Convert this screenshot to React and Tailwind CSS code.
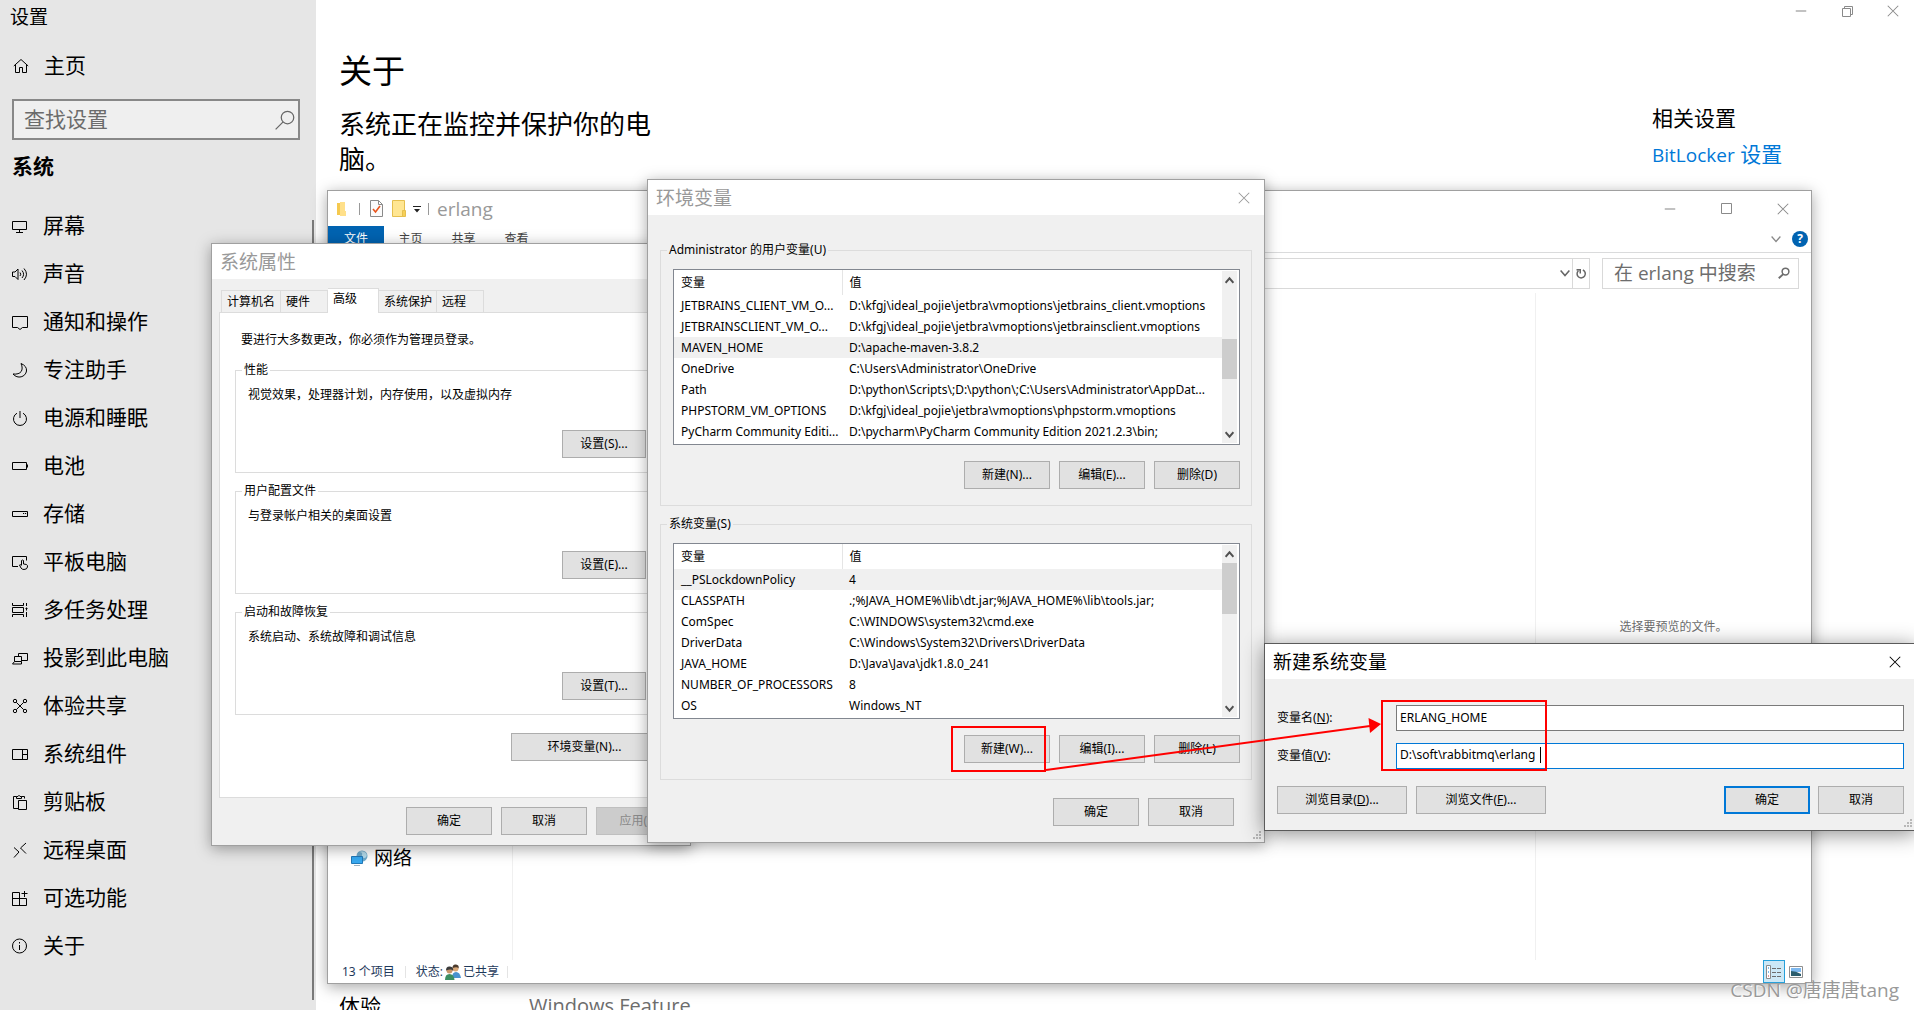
import { useState } from "react";

const FONT = "font-['Open_Sans','Noto_Sans_CJK_SC',sans-serif]";
const DIALOG_FONT = "font-['Noto_Sans','Noto_Sans_CJK_SC',sans-serif]";

function Icon({ children, size = 16, className = "" }) {
  return (
    <svg
      width={size}
      height={size}
      viewBox="0 0 16 16"
      fill="none"
      stroke="currentColor"
      strokeWidth="1"
      className={`shrink-0 ${className}`}
      aria-hidden="true"
    >
      {children}
    </svg>
  );
}

const NAV = [
  { label: "屏幕", icon: <path d="M.5 3.500h14v8H.5zM7.500 11.500v3M4 14.500h7" /> },
  {
    label: "声音",
    icon: <path d="M.5 6v4.500h2.500l3 3v-10.500l-3 3zM8 6.500q1.500 1.800 0 3.500M10 4.500q3.200 3.800 0 7.500M12 2.500q5 5.700 0 11.500" />,
  },
  { label: "通知和操作", icon: <path d="M.5 2.500h15v11h-5l-2.500 2-2.500-2h-5z" /> },
  { label: "专注助手", icon: <path d="M9 1.500q6 2.500 5.500 7.500c-.8 6-9 8.500-13.500 3 8 1 11-4 8-10.500z" /> },
  { label: "电源和睡眠", icon: <path d="M5 3.200a6.500 6.500 0 1 0 6 0M8 1v7" /> },
  { label: "电池", icon: <path d="M.5 4.500h14v7H.5zM15.500 6.500v3" /> },
  { label: "存储", icon: <path d="M.5 5.500h15v5H.5zM11 7.500h1.200M13 7.500h1.200" /> },
  {
    label: "平板电脑",
    icon: (
      <>
        <path d="M6 12.500H.5v-10h14v4" />
        <path d="M9.500 11V6.500q1-1 2 0V10l3 .5q1.200.5 1 2.500-.5 2.500-3.500 2.500-2 0-3-1.500L7.500 11q1-.8 2 .5" />
      </>
    ),
  },
  {
    label: "多任务处理",
    icon: <path d="M.5 1v2.500h11V1M.5 15v-2.500h11V15M.5 5.500h11v5H.5zM14.500 1v3M14.500 5.500v3M13.500 6.500h2M14.500 10v5" />,
  },
  { label: "投影到此电脑", icon: <path d="M6.500 6.500v-3h9v7h-6M2.500 6.500h7v5h-7zM2.500 11.500l-2 2.500h9v-2.500" /> },
  {
    label: "体验共享",
    icon: (
      <>
        <circle cx="3" cy="3" r="1.700" />
        <circle cx="13" cy="3" r="1.700" />
        <circle cx="3" cy="13" r="1.700" />
        <circle cx="13" cy="13" r="1.700" />
        <path d="M4.300 4.300l7.400 7.400M11.700 4.300l-7.400 7.400" />
      </>
    ),
  },
  { label: "系统组件", icon: <path d="M.5 3.500h15v10H.5zM10.500 3.500v10M10.500 8.500h5" /> },
  { label: "剪贴板", icon: <path d="M6 14.500H1.500v-12h3M9.500 2.500h3v2M4.500 4.500v-2h1.500q1-2.500 2 0h1.500v2zM6.500 6.500h8v9h-8z" /> },
  { label: "远程桌面", icon: <path d="M2 5.500l5 4.500-5 5.500M14 1L8.500 6l5.500 5.500" /> },
  { label: "可选功能", icon: <path d="M.5 2.500h7v13h-7zM.5 8.500h14v7h-14M12.500 1v6M9.500 3.500h6" /> },
  {
    label: "关于",
    icon: (
      <>
        <circle cx="7.500" cy="8" r="7" />
        <path d="M7.500 7v5M7.500 4v1.500" />
      </>
    ),
  },
];

const USER_VARS = [
  ["JETBRAINS_CLIENT_VM_O...", "D:\\kfgj\\ideal_pojie\\jetbra\\vmoptions\\jetbrains_client.vmoptions"],
  ["JETBRAINSCLIENT_VM_O...", "D:\\kfgj\\ideal_pojie\\jetbra\\vmoptions\\jetbrainsclient.vmoptions"],
  ["MAVEN_HOME", "D:\\apache-maven-3.8.2"],
  ["OneDrive", "C:\\Users\\Administrator\\OneDrive"],
  ["Path", "D:\\python\\Scripts\\;D:\\python\\;C:\\Users\\Administrator\\AppDat..."],
  ["PHPSTORM_VM_OPTIONS", "D:\\kfgj\\ideal_pojie\\jetbra\\vmoptions\\phpstorm.vmoptions"],
  ["PyCharm Community Editi...", "D:\\pycharm\\PyCharm Community Edition 2021.2.3\\bin;"],
];

const SYSTEM_VARS = [
  ["__PSLockdownPolicy", "4"],
  ["CLASSPATH", ".;%JAVA_HOME%\\lib\\dt.jar;%JAVA_HOME%\\lib\\tools.jar;"],
  ["ComSpec", "C:\\WINDOWS\\system32\\cmd.exe"],
  ["DriverData", "C:\\Windows\\System32\\Drivers\\DriverData"],
  ["JAVA_HOME", "D:\\Java\\Java\\jdk1.8.0_241"],
  ["NUMBER_OF_PROCESSORS", "8"],
  ["OS", "Windows_NT"],
];

function Button({ children, className = "w-[86px]", primary, disabled }) {
  const look = disabled
    ? "border border-[#bfbfbf] bg-[#cccccc] text-[#8a8a8a]"
    : primary
      ? "border-2 border-[#0078d7] bg-[#e1e1e1]"
      : "border border-[#adadad] bg-[#e1e1e1]";
  return (
    <button type="button" disabled={disabled} className={`h-7 shrink-0 text-xs whitespace-nowrap ${look} ${className}`}>
      {children}
    </button>
  );
}

function CloseIcon() {
  return (
    <Icon size={12}>
      <path d="M1 1l14 14M15 1L1 15" strokeWidth="1.400" />
    </Icon>
  );
}

function Grip() {
  return (
    <svg width="9" height="9" className="absolute right-[2px] bottom-[2px]" fill="#b8b8b8" aria-hidden="true">
      <path d="M6 0h2v2H6zM3 3h2v2H3zM6 3h2v2H6zM0 6h2v2H0zM3 6h2v2H3zM6 6h2v2H6z" />
    </svg>
  );
}

function Dialog({ title, active, closable = true, grip, className, children }) {
  return (
    <section
      className={`absolute border bg-[#f0f0f0] text-xs leading-4 text-black ${DIALOG_FONT} ${
        active ? "border-[#5a5a5a] shadow-[0_3px_20px_rgba(0,0,0,0.45)]" : "border-[#a0a0a0] shadow-[0_3px_14px_rgba(0,0,0,0.35)]"
      } ${className}`}
    >
      <header
        className={`flex h-[35px] items-center justify-between bg-white pr-3 pl-2 ${active ? "text-black" : "text-[#999999]"}`}
      >
        <h2 className="text-[19px] leading-6">{title}</h2>
        {closable && (
          <button type="button" aria-label="关闭" className="px-[2px]">
            <CloseIcon />
          </button>
        )}
      </header>
      {children}
      {grip && <Grip />}
    </section>
  );
}

function Settings() {
  return (
    <div className="flex h-full">
      <nav className="relative flex w-[316px] shrink-0 flex-col bg-[#e6e6e6] px-3 text-[21px]">
        <div className="-ml-[2px] h-[34px] text-[19px] leading-[34px]">设置</div>
        <a href="#home" className="mt-2 flex h-12 items-center gap-[15px]">
          <Icon className="ml-[1px]">
            <path d="M.8 8L8 1.500 15.200 8M2.500 6.500v8h4V9.500h3v5h4v-8" />
          </Icon>
          主页
        </a>
        <div className="mt-[9px] mr-1 flex h-[41px] items-center border-2 border-[#888888] bg-[#efefef] pr-[3px] pl-[10px]">
          <input
            aria-label="查找设置"
            placeholder="查找设置"
            className="min-w-0 flex-1 bg-transparent outline-none placeholder:text-[#6b6b6b]"
          />
          <Icon size={20} className="text-[#666666]">
            <circle cx="10" cy="6" r="5" />
            <path d="M6.500 9.500L.5 15.500" />
          </Icon>
        </div>
        <h2 className="mt-[10px] h-8 leading-8 font-bold">系统</h2>
        <ul className="mt-5">
          {NAV.map((item) => (
            <li key={item.label}>
              <a href={`#${item.label}`} className="flex h-12 items-center gap-[15px]">
                <Icon>{item.icon}</Icon>
                {item.label}
              </a>
            </li>
          ))}
        </ul>
        <div className="absolute top-[220px] right-[2px] bottom-[10px] w-[2px] bg-[#7a7a7a]" />
      </nav>

      <main className="flex-1 pt-[49px] pl-[23px]">
        <h1 className="text-[33px] leading-[44px]">关于</h1>
        <p className="mt-[14px] max-w-[320px] text-[26px] leading-[35px]">系统正在监控并保护你的电脑。</p>
        <div className="mt-[815px] flex text-[21px] leading-7">
          <span className="w-[190px]">体验</span>
          <span className="text-xl leading-7 text-[#6d6d6d]">Windows Feature</span>
        </div>
      </main>

      <aside className="w-[262px] shrink-0 text-[21px] leading-7">
        <div className="-mr-[2px] flex h-[22px] justify-end text-[#8a8a8a]">
          <button type="button" aria-label="最小化" className="flex w-[46px] items-center justify-center">
            <Icon size={12}>
              <path d="M1 8h14" strokeWidth="1.400" />
            </Icon>
          </button>
          <button type="button" aria-label="还原" className="flex w-[46px] items-center justify-center">
            <svg width="11" height="11" fill="none" stroke="currentColor" aria-hidden="true">
              <path d="M.5 2.500h8v8h-8zM2.500 2.500v-2h8v8h-2" />
            </svg>
          </button>
          <button type="button" aria-label="关闭" className="flex w-[46px] items-center justify-center">
            <CloseIcon />
          </button>
        </div>
        <h3 className="mt-[82px]">相关设置</h3>
        <a href="#bitlocker" className="mt-2 block text-[#0078d7]">
          <span className="text-[19px] leading-7">BitLocker</span> 设置
        </a>
      </aside>
    </div>
  );
}

function Explorer() {
  return (
    <section className="absolute top-[190px] right-[102px] bottom-[26px] left-[327px] flex flex-col border border-[#a0a0a0] bg-white text-xs leading-4 shadow-[0_3px_14px_rgba(0,0,0,0.35)]">
      <header className="flex h-[35px] items-center pr-[22px] pl-[9px]">
        <svg width="10" height="14" aria-hidden="true">
          <path d="M0 1h3v12H0z" fill="#f5c94f" />
          <path d="M3 0h5v9h1v5H3z" fill="#ffe08a" />
        </svg>
        <span className="ml-3 h-3 w-px bg-[#999999]" />
        <svg width="13" height="17" className="ml-[10px]" fill="#fbfbfb" stroke="#8a8a8a" aria-hidden="true">
          <path d="M.5.5h8l4 4v12H.5zM8.500.5v4h4" />
          <path d="M3 9l2.500 3L10 6" fill="none" stroke="#e8541c" strokeWidth="1.600" />
        </svg>
        <svg width="14" height="17" className="ml-[9px]" stroke="#e5bf4e" aria-hidden="true">
          <path d="M.5.5h12v16H.5z" fill="#ffe692" />
          <path d="M10.500 10.500h3v6h-3z" fill="#f7d057" />
        </svg>
        <svg width="8" height="8" className="ml-[7px]" fill="#222222" aria-hidden="true">
          <path d="M0 1h8v1H0zM1 4h6L4 7.500z" />
        </svg>
        <span className="ml-[7px] h-3 w-px bg-[#999999]" />
        <h2 className="ml-2 text-[19px] leading-6 text-[#999999]">erlang</h2>
        <div className="ml-auto flex items-center gap-[45px] text-[#8a8a8a]">
          <button type="button" aria-label="最小化">
            <Icon size={12}>
              <path d="M1 8h14" strokeWidth="1.400" />
            </Icon>
          </button>
          <button type="button" aria-label="最大化">
            <svg width="11" height="11" fill="none" stroke="currentColor" aria-hidden="true">
              <path d="M.5.5h10v10H.5z" />
            </svg>
          </button>
          <button type="button" aria-label="关闭">
            <CloseIcon />
          </button>
        </div>
      </header>

      <div className="flex h-[27px] items-center border-b border-[#dadbdc] text-[#444444]">
        <button type="button" className="h-full w-14 bg-[#0063b1] text-white">
          文件
        </button>
        <button type="button" className="w-[53px]">主页</button>
        <button type="button" className="w-[53px]">共享</button>
        <button type="button" className="w-[53px]">查看</button>
        <div className="ml-auto flex items-center gap-[11px] pr-[3px]">
          <Icon size={10} className="text-[#888888]">
            <path d="M1 4l7 8 7-8" strokeWidth="2" />
          </Icon>
          <button type="button" aria-label="帮助" className="h-4 w-4 rounded-full bg-[#0063b1] text-xs leading-4 font-bold text-white">
            ?
          </button>
        </div>
      </div>

      <div className="flex h-10 items-center gap-3 pr-3 pl-[120px]">
        <div className="flex h-[31px] flex-1 items-center justify-end border border-[#d9d9d9] text-[#666666]">
          <Icon size={10} className="mr-[2px]">
            <path d="M1 4l7 8 7-8" strokeWidth="2.500" />
          </Icon>
          <button type="button" aria-label="刷新" className="flex h-full w-[17px] items-center justify-center border-l border-[#d9d9d9]">
            <Icon size={12}>
              <path d="M10.500 4a5.500 5.500 0 1 1-6 1M2 3.500h5v5" strokeWidth="2" />
            </Icon>
          </button>
        </div>
        <div className="flex h-[31px] w-[197px] items-center border border-[#d9d9d9] pr-2 pl-[11px] text-[#6d6d6d]">
          <input
            aria-label="在 erlang 中搜索"
            placeholder="在 erlang 中搜索"
            className="min-w-0 flex-1 bg-transparent text-[19px] leading-7 outline-none placeholder:text-[#6d6d6d]"
          />
          <Icon size={12}>
            <circle cx="10" cy="6" r="4.500" strokeWidth="2" />
            <path d="M7 9.500L1 15" strokeWidth="2.500" />
          </Icon>
        </div>
      </div>

      <div className="flex min-h-0 flex-1">
        <div className="flex w-[185px] flex-col justify-end border-r border-[#f0f0f0] pb-[88px] pl-[23px]">
          <a href="#network" className="flex h-7 items-center gap-[6px] text-[19px] leading-7">
            <svg width="17" height="17" aria-hidden="true">
              <circle cx="11" cy="6" r="5.500" fill="#6fa9c9" />
              <path d="M8 2q4 0 3 3t3 3q3-2 1-5-3-3-7-1z" fill="#b5dcec" />
              <path d="M.5 6.500h11v7H.5z" fill="#38a9f0" stroke="#2279b8" />
              <path d="M3 15.500h6" stroke="#9fb4c2" />
            </svg>
            网络
          </a>
        </div>
        <div className="flex-1" />
        <div className="flex w-[276px] items-center justify-center border-l border-[#f0f0f0] text-[#6d6d6d]">
          选择要预览的文件。
        </div>
      </div>

      <footer className="flex h-[23px] items-center pr-2 pl-[14px] text-[#1e395b]">
        <span className={DIALOG_FONT}>13 个项目</span>
        <span className="mr-[10px] ml-[10px] h-3 w-px bg-[#e4e4e4]" />
        <span>状态:</span>
        <svg width="18" height="16" className="mx-[1px]" aria-hidden="true">
          <path d="M8 14q0-6 4-6t5 6z" fill="#4a93cf" />
          <circle cx="11.500" cy="4.500" r="3" fill="#d9a878" />
          <path d="M8.500 4q0-4 3.500-3.500t2.500 4q-1-2-6-.5z" fill="#4b3a2c" />
          <path d="M1 16q0-6 4.500-6t5 6z" fill="#3d8f62" />
          <circle cx="5.500" cy="6.500" r="3" fill="#c9966a" />
          <path d="M2 6.500q0-4.500 4-4t3 4.500q-1-2.500-7-.5z" fill="#3b3b3b" />
        </svg>
        <span>已共享</span>
        <span className="ml-2 h-3 w-px bg-[#e4e4e4]" />
        <div className="ml-auto flex items-center gap-1">
          <button type="button" aria-label="详细信息" className="flex h-[23px] w-[22px] items-center justify-center border border-[#26a0da] bg-[#cce8f6]">
            <svg width="16" height="14" fill="none" aria-hidden="true">
              <path d="M.5.5h4v13h-4z" fill="#ffffff" stroke="#8a8a8a" />
              <path d="M2 3h1M2 7h1" stroke="#0078d7" />
              <path d="M2 11h1" stroke="#d03030" />
              <path d="M6 3.500h4M11 3.500h4M6 7.500h4M11 7.500h4M6 11.500h4M11 11.500h4" stroke="#6d6d6d" />
            </svg>
          </button>
          <button type="button" aria-label="大图标">
            <svg width="14" height="12" aria-hidden="true">
              <path d="M.5.5h13v11H.5z" fill="#ffffff" stroke="#8f8f8f" />
              <path d="M2 2h10v4H2z" fill="#7db8ef" />
              <path d="M2 5q5 0 10 3v2H2z" fill="#2d5e6e" />
            </svg>
          </button>
        </div>
      </footer>
    </section>
  );
}

const TABS = [
  { label: "计算机名", width: "w-[60px]" },
  { label: "硬件", width: "w-[47px]" },
  { label: "高级", width: "w-[51px]" },
  { label: "系统保护", width: "w-[58px]" },
  { label: "远程", width: "w-[47px]" },
];

function PropertyGroup({ legend, text, button }) {
  return (
    <fieldset className="mt-[10px] border border-[#dcdcdc] pr-5 pb-[14px] pl-3">
      <legend className="-ml-[6px] px-[2px]">{legend}</legend>
      <p className="mt-[9px]">{text}</p>
      <div className="mt-[27px] flex justify-end">
        <Button className="w-[84px]">{button}</Button>
      </div>
    </fieldset>
  );
}

function SystemProperties() {
  const [tab, setTab] = useState("高级");
  return (
    <Dialog title="系统属性" closable={false} className="top-[243px] left-[211px] w-[480px]">
      <div role="tablist" className="mt-[9px] flex h-6 items-end px-[9px]">
        {TABS.map((t, i) => (
          <button
            key={t.label}
            type="button"
            role="tab"
            aria-selected={tab === t.label}
            onClick={() => setTab(t.label)}
            className={`border-t border-r border-[#dcdcdc] pl-[5px] text-left whitespace-nowrap ${t.width} ${
              i === 0 ? "border-l" : ""
            } ${tab === t.label ? "relative z-10 -mb-px h-[25px] bg-white pb-1" : "h-[22px]"}`}
          >
            {t.label}
          </button>
        ))}
      </div>
      <div className="mx-[7px] border border-[#dcdcdc] bg-white px-[15px] pt-[19px] pb-9">
        <p className="mb-[14px] pl-[6px]">要进行大多数更改，你必须作为管理员登录。</p>
        <PropertyGroup legend="性能" text="视觉效果，处理器计划，内存使用，以及虚拟内存" button="设置(S)..." />
        <PropertyGroup legend="用户配置文件" text="与登录帐户相关的桌面设置" button="设置(E)..." />
        <PropertyGroup legend="启动和故障恢复" text="系统启动、系统故障和调试信息" button="设置(T)..." />
        <div className="mt-[18px] flex justify-end pr-[9px]">
          <Button className="w-[147px]">环境变量(N)...</Button>
        </div>
      </div>
      <div className="mt-[9px] flex justify-end gap-[9px] pr-2 pb-[10px]">
        <Button>确定</Button>
        <Button>取消</Button>
        <Button disabled>应用(A)</Button>
      </div>
    </Dialog>
  );
}

function VariableList({ legend, rows, selected, thumb, buttons }) {
  return (
    <fieldset className="mx-3 mt-[10px] border border-[#dcdcdc] pr-[11px] pb-4 pl-3">
      <legend className="-ml-[6px] px-[2px]">{legend}</legend>
      <div className="mt-[11px] flex h-[176px] border border-[#828790] bg-white">
        <table className="flex-1 table-fixed self-start">
          <thead>
            <tr className="h-[25px] text-left">
              <th scope="col" className="w-[168px] border-r border-[#e5e5e5] p-0 pl-[7px] font-normal">变量</th>
              <th scope="col" className="p-0 pl-[7px] font-normal">值</th>
            </tr>
          </thead>
          <tbody>
            {rows.map(([name, value]) => (
              <tr key={name} className={`h-[21px] whitespace-nowrap ${name === selected ? "bg-[#f0f0f0]" : ""}`}>
                <td className="p-0 pl-[7px]">{name}</td>
                <td className="p-0 pl-[7px]">{value}</td>
              </tr>
            ))}
          </tbody>
        </table>
        <div className="my-px mr-[2px] flex w-[15px] flex-col items-center bg-[#f0f0f0] text-[#505050]">
          <Icon size={9} className="mt-[5px] mb-1">
            <path d="M1 12l7-8 7 8" strokeWidth="3.500" />
          </Icon>
          <div className={`w-full bg-[#cdcdcd] ${thumb}`} />
          <Icon size={9} className="mt-auto mb-1">
            <path d="M1 4l7 8 7-8" strokeWidth="3.500" />
          </Icon>
        </div>
      </div>
      <div className="mt-4 flex justify-end gap-[9px]">
        {buttons.map((b) => (
          <Button key={b}>{b}</Button>
        ))}
      </div>
    </fieldset>
  );
}

function EnvironmentVariables() {
  return (
    <Dialog title="环境变量" grip className="top-[179px] left-[647px] w-[618px]">
      <div className="pt-[17px]">
        <VariableList
          legend="Administrator 的用户变量(U)"
          rows={USER_VARS}
          selected="MAVEN_HOME"
          thumb="mt-[50px] h-10"
          buttons={["新建(N)...", "编辑(E)...", "删除(D)"]}
        />
        <VariableList
          legend="系统变量(S)"
          rows={SYSTEM_VARS}
          selected="__PSLockdownPolicy"
          thumb="h-[51px]"
          buttons={["新建(W)...", "编辑(I)...", "删除(L)"]}
        />
      </div>
      <div className="mt-[18px] flex justify-end gap-[9px] pr-[30px] pb-4">
        <Button>确定</Button>
        <Button>取消</Button>
      </div>
    </Dialog>
  );
}

function NewVariable() {
  const [name, setName] = useState("ERLANG_HOME");
  const [value, setValue] = useState("D:\\soft\\rabbitmq\\erlang");
  return (
    <Dialog title="新建系统变量" active grip className="top-[643px] -right-[2px] left-[1264px]">
      <form className="pt-[26px] pr-[11px] pb-4 pl-3" onSubmit={(e) => e.preventDefault()}>
        <div className="flex items-center">
          <label htmlFor="var-name" className="w-[119px]">
            变量名(<u>N</u>):
          </label>
          <input
            id="var-name"
            value={name}
            onChange={(e) => setName(e.target.value)}
            className="h-[26px] flex-1 border border-[#7a7a7a] bg-white px-[3px] pb-[2px] outline-none"
          />
        </div>
        <div className="mt-3 flex items-center">
          <label htmlFor="var-value" className="w-[119px]">
            变量值(<u>V</u>):
          </label>
          <div className="relative flex h-[26px] flex-1 items-center border border-[#0078d7] bg-white px-[3px] pb-[2px]">
            <input
              id="var-value"
              value={value}
              onChange={(e) => setValue(e.target.value)}
              className="w-full bg-transparent outline-none"
            />
            {/* text cursor */}
            <span className="absolute top-[3px] left-[143px] h-4 w-px bg-black" />
          </div>
        </div>
        <div className="mt-[17px] flex">
          <Button className="w-[130px]">
            浏览目录(<u>D</u>)...
          </Button>
          <Button className="ml-[9px] w-[130px]">
            浏览文件(<u>F</u>)...
          </Button>
          <Button primary className="ml-auto w-[86px]">确定</Button>
          <Button className="ml-2 w-[86px]">取消</Button>
        </div>
      </form>
    </Dialog>
  );
}

function Annotations() {
  return (
    <svg
      width="600"
      height="76"
      className="pointer-events-none absolute top-[698px] left-[950px]"
      fill="none"
      stroke="#ff0000"
      strokeWidth="2"
      aria-hidden="true"
    >
      <rect x="2" y="29" width="93" height="44" />
      <rect x="432" y="3" width="164" height="69" />
      <path d="M96 72L420 28" />
      <path d="M431 26l-12.500-6 1.500 15z" fill="#ff0000" stroke="none" />
    </svg>
  );
}

export default function App() {
  return (
    <div className={`relative h-screen overflow-hidden bg-white text-black ${FONT}`}>
      <Settings />
      <Explorer />
      <SystemProperties />
      <EnvironmentVariables />
      <NewVariable />
      <Annotations />
      <div className="absolute right-[15px] bottom-[5px] text-[19px] leading-[30px] text-[#999999] [text-shadow:1px_1px_0_#ffffff]">
        CSDN @唐唐唐tang
      </div>
    </div>
  );
}
